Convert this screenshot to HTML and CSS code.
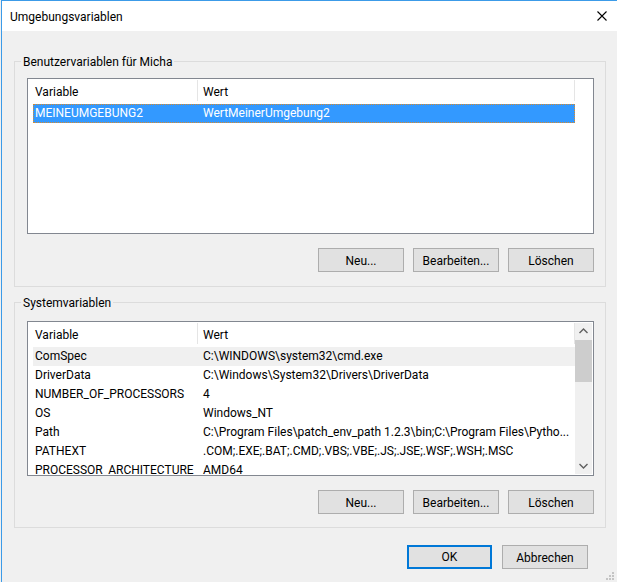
FILE: index.html
```html
<!DOCTYPE html>
<html lang="de">
<head>
<meta charset="utf-8">
<title>Umgebungsvariablen</title>
<link rel="stylesheet" href="styles.css">
</head>
<body>
<div class="window">
  <div class="titlebar">
    <span class="title">Umgebungsvariablen</span>
    <svg class="close" width="10" height="10" viewBox="0 0 10 10" aria-hidden="true">
      <path d="M0.5 0.5 L9.5 9.5 M9.5 0.5 L0.5 9.5" stroke="#000" stroke-width="1.1" fill="none"/>
    </svg>
  </div>
  <div class="content">
    <section class="group group-user">
      <div class="legend">Benutzervariablen für Micha</div>
      <div class="list list-user">
        <div class="list-main">
          <div class="header">
            <div class="hcell hc1">Variable</div>
            <div class="hcell hc2">Wert</div>
          </div>
          <div class="row selected">
            <div class="cell c1">MEINEUMGEBUNG2</div>
            <div class="cell c2">WertMeinerUmgebung2</div>
          </div>
        </div>
      </div>
      <div class="buttons">
        <button class="btn">Neu...</button>
        <button class="btn">Bearbeiten...</button>
        <button class="btn">Löschen</button>
      </div>
    </section>

    <section class="group group-system">
      <div class="legend">Systemvariablen</div>
      <div class="list list-system">
        <div class="list-main">
          <div class="header">
            <div class="hcell hc1">Variable</div>
            <div class="hcell hc2">Wert</div>
          </div>
          <div class="row inactive">
            <div class="cell c1">ComSpec</div>
            <div class="cell c2">C:\WINDOWS\system32\cmd.exe</div>
          </div>
          <div class="row">
            <div class="cell c1">DriverData</div>
            <div class="cell c2">C:\Windows\System32\Drivers\DriverData</div>
          </div>
          <div class="row">
            <div class="cell c1">NUMBER_OF_PROCESSORS</div>
            <div class="cell c2">4</div>
          </div>
          <div class="row">
            <div class="cell c1">OS</div>
            <div class="cell c2">Windows_NT</div>
          </div>
          <div class="row">
            <div class="cell c1">Path</div>
            <div class="cell c2">C:\Program Files\patch_env_path 1.2.3\bin;C:\Program Files\Pytho...</div>
          </div>
          <div class="row">
            <div class="cell c1">PATHEXT</div>
            <div class="cell c2">.COM;.EXE;.BAT;.CMD;.VBS;.VBE;.JS;.JSE;.WSF;.WSH;.MSC</div>
          </div>
          <div class="row">
            <div class="cell c1">PROCESSOR_ARCHITECTURE</div>
            <div class="cell c2">AMD64</div>
          </div>
        </div>
        <div class="scrollbar">
          <div class="sb-arrow">
            <svg width="17" height="17" viewBox="0 0 17 17" aria-hidden="true">
              <path d="M4.5 10 L8.5 6 L12.5 10" stroke="#606060" stroke-width="1.4" fill="none"/>
            </svg>
          </div>
          <div class="sb-track">
            <div class="sb-thumb"></div>
          </div>
          <div class="sb-arrow">
            <svg width="17" height="17" viewBox="0 0 17 17" aria-hidden="true">
              <path d="M4.5 7 L8.5 11 L12.5 7" stroke="#606060" stroke-width="1.4" fill="none"/>
            </svg>
          </div>
        </div>
      </div>
      <div class="buttons">
        <button class="btn">Neu...</button>
        <button class="btn">Bearbeiten...</button>
        <button class="btn">Löschen</button>
      </div>
    </section>

    <div class="footer">
      <button class="btn btn-ok">OK</button>
      <button class="btn btn-cancel">Abbrechen</button>
    </div>
  </div>
  <svg class="grip" width="9" height="9" viewBox="0 0 9 9" aria-hidden="true">
    <rect x="6" y="0" width="2" height="2" fill="#c4c4c4"/>
    <rect x="3" y="3" width="2" height="2" fill="#c4c4c4"/>
    <rect x="6" y="3" width="2" height="2" fill="#c4c4c4"/>
    <rect x="0" y="6" width="2" height="2" fill="#c4c4c4"/>
    <rect x="3" y="6" width="2" height="2" fill="#c4c4c4"/>
    <rect x="6" y="6" width="2" height="2" fill="#c4c4c4"/>
  </svg>
</div>
</body>
</html>
```

FILE: styles.css
```css
html, body {
  margin: 0;
  padding: 0;
}

body {
  background: #f0f0f0;
  font-family: Roboto, "Liberation Sans", Arial, sans-serif;
  font-size: 12px;
  color: #000;
}

.window {
  position: relative;
  width: 615px;
  height: 581px;
  margin-left: 1px;
  border-top: 1px solid #3c9be8;
  border-left: 1px solid #3c9be8;
  background: #f0f0f0;
  overflow: hidden;
}

.titlebar {
  height: 30px;
  background: #fff;
  display: flex;
  align-items: center;
  justify-content: space-between;
  padding: 0 10px 0 8px;
}

.title {
  line-height: 16px;
  padding-top: 1px;
}

.close {
  display: block;
}

.content {
  padding: 30px 11px 0 12px;
}

.group {
  border: 1px solid #dcdcdc;
  padding: 0 11px 14px 12px;
}

.group-system {
  margin-top: 15px;
  padding-bottom: 13px;
}

.legend {
  width: max-content;
  margin: -7px 0 0 -6px;
  padding: 0 2px;
  background: #f0f0f0;
  line-height: 15px;
}

.list {
  box-sizing: border-box;
  height: 156px;
  margin-top: 8px;
  border: 1px solid #828790;
  padding: 1px;
  background: #fff;
  display: flex;
}

.list-system {
  height: 155px;
  margin-top: 10px;
}

.list-main {
  width: 546px;
  overflow: hidden;
}

.header {
  display: flex;
  height: 24px;
}

.hcell {
  box-sizing: border-box;
  height: 21px;
  padding-top: 2px;
  line-height: 21px;
  border-right: 1px solid #e5e5e5;
  white-space: nowrap;
  overflow: hidden;
}

.hc1 {
  width: 169px;
  padding-left: 6px;
}

.hc2 {
  width: 377px;
  padding-left: 5px;
}

.row {
  display: flex;
  width: 542px;
  height: 19px;
  margin-left: 4px;
  white-space: nowrap;
}

.cell {
  box-sizing: border-box;
  height: 19px;
  line-height: 19px;
  white-space: nowrap;
}

.c1 {
  width: 164px;
  padding-left: 2px;
  overflow: visible;
}

.c2 {
  width: 378px;
  padding-left: 6px;
  overflow: hidden;
  text-overflow: ellipsis;
}

.row.selected {
  background: #3399ff;
  color: #fff;
  outline: 1px dotted #d98a2b;
  outline-offset: -1px;
}

.row.inactive {
  background: #f0f0f0;
}

.scrollbar {
  width: 17px;
  background: #f0f0f0;
  display: flex;
  flex-direction: column;
}

.sb-arrow {
  height: 17px;
}

.sb-arrow svg {
  display: block;
}

.sb-track {
  flex: 1;
}

.sb-thumb {
  height: 42px;
  background: #cdcdcd;
}

.buttons {
  display: flex;
  justify-content: flex-end;
  gap: 9px;
  margin-top: 14px;
}

.btn {
  box-sizing: border-box;
  width: 86px;
  height: 24px;
  margin: 0;
  padding: 1px 0 0;
  border: 1px solid #adadad;
  background: #e1e1e1;
  font-family: inherit;
  font-size: 12px;
  color: #000;
  line-height: 20px;
}

.footer {
  display: flex;
  justify-content: flex-end;
  gap: 10px;
  margin-top: 17px;
  padding-right: 18px;
}

.btn-ok {
  width: 85px;
  border: 2px solid #0078d7;
  padding-top: 0;
}

.grip {
  position: absolute;
  right: 2px;
  bottom: 1px;
  display: block;
}
```
